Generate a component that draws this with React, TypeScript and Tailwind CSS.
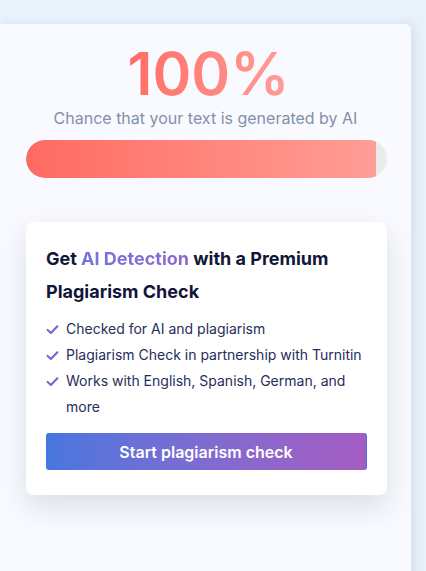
const FEATURES = [
  "Checked for AI and plagiarism",
  "Plagiarism Check in partnership with Turnitin",
  "Works with English, Spanish, German, and more",
];

function CheckIcon() {
  return (
    <svg viewBox="0 0 16 16" className="mt-[7px] h-[13px] w-[13px] shrink-0" aria-hidden>
      <path
        d="M2 8.6 L6 12.2 L14 4"
        fill="none"
        stroke="#7a62cf"
        strokeWidth="2.6"
        strokeLinecap="round"
        strokeLinejoin="round"
      />
    </svg>
  );
}

export default function App() {
  return (
    <div className="h-[571px] w-[426px] overflow-hidden bg-[#e9f1fb] pt-6 font-['Inter',sans-serif]">
      <div className="h-[560px] w-[411px] rounded-tr-md bg-[#f8faff] pt-5 shadow-[4px_0_10px_rgba(120,150,200,0.18)]">
        <div className="flex flex-col items-center">
          <div className="bg-gradient-to-r from-[#ff6a62] to-[#ff9d98] bg-clip-text pl-1.5 text-[59px] font-semibold leading-none text-transparent">
            100%
          </div>
          <p className="mt-[3px] text-base leading-6 text-[#8590a8]">
            Chance that your text is generated by AI
          </p>
        </div>

        <div className="ml-[26px] mt-2.5 flex h-[38px] w-[361px] overflow-hidden rounded-full bg-gradient-to-r from-[#d9d9d9] to-[#ececec]">
          <div className="h-full w-[350px] rounded-l-full bg-gradient-to-r from-[#ff6a62] to-[#ff9d96]" />
        </div>

        <div className="ml-[26px] mt-11 w-[361px] rounded-lg bg-white px-5 pb-[25px] pt-5 shadow-[0_12px_28px_rgba(30,40,60,0.13)]">
          <h2 className="text-lg font-bold leading-[33px] text-[#111638]">
            Get{" "}
            <span className="bg-gradient-to-r from-[#6e76dc] to-[#8e65cf] bg-clip-text text-transparent">
              AI Detection
            </span>{" "}
            with a Premium Plagiarism Check
          </h2>
          <ul className="mt-2">
            {FEATURES.map((f) => (
              <li key={f} className="flex gap-[7px] text-sm leading-[26px] text-[#262d5c]">
                <CheckIcon />
                <span>{f}</span>
              </li>
            ))}
          </ul>
          <button
            type="button"
            className="mt-[13px] h-[37px] w-full rounded-[3px] border-r border-[#4a70e0] bg-gradient-to-r from-[#4776de] to-[#a55cc2] text-base font-semibold text-white"
          >
            Start plagiarism check
          </button>
        </div>
      </div>
    </div>
  );
}
